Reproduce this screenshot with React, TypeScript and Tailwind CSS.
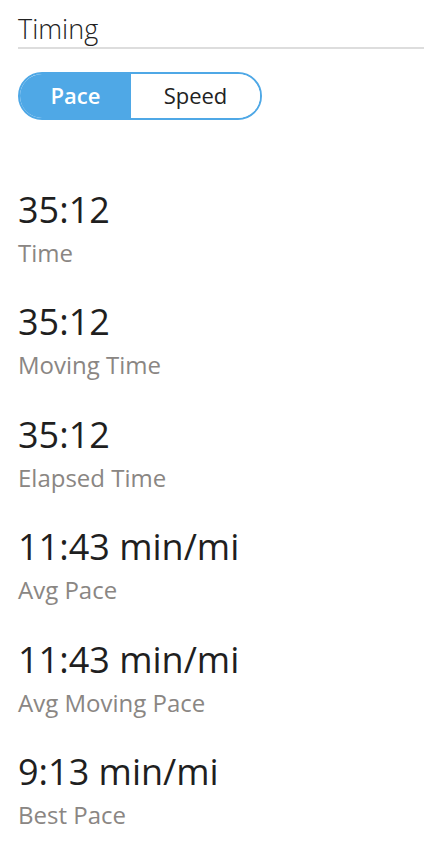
import { useState } from 'react';

const stats = [
  { value: '35:12', label: 'Time' },
  { value: '35:12', label: 'Moving Time' },
  { value: '35:12', label: 'Elapsed Time' },
  { value: '11:43 min/mi', label: 'Avg Pace' },
  { value: '11:43 min/mi', label: 'Avg Moving Pace' },
  { value: '9:13 min/mi', label: 'Best Pace' },
];

export default function App() {
  const [mode, setMode] = useState<'pace' | 'speed'>('pace');

  return (
    <div className="min-h-[852px] bg-white pl-[18px] pr-[22px] pt-[12px] font-['Open_Sans',sans-serif] text-[#222]">
      {/* Header */}
      <h2 className="border-b-2 border-[#dddddd] pb-[1px] text-[27px] leading-[34px] font-light">
        Timing
      </h2>

      {/* Pace / Speed toggle */}
      <div className="mt-[23px] flex h-[48px] w-[244px] overflow-hidden rounded-full border-2 border-[#4fa8e6]">
        <button
          onClick={() => setMode('pace')}
          className={`w-[111px] pb-[2px] text-[22px] font-semibold ${
            mode === 'pace' ? 'bg-[#4fa8e6] text-white' : 'bg-white text-[#222]'
          }`}
        >
          Pace
        </button>
        <button
          onClick={() => setMode('speed')}
          className={`flex-1 pb-[2px] text-[22px] ${
            mode === 'speed' ? 'bg-[#4fa8e6] text-white font-semibold' : 'bg-white text-[#222]'
          }`}
        >
          Speed
        </button>
      </div>

      {/* Stats */}
      <div className="mt-[65px] flex flex-col gap-[26.4px]">
        {stats.map((s, i) => (
          <div key={i}>
            <div className="text-[36px] leading-[50px] text-[#1f1f1f]">{s.value}</div>
            <div className="text-[24px] leading-[36px] text-[#8a8683]">{s.label}</div>
          </div>
        ))}
      </div>
    </div>
  );
}
